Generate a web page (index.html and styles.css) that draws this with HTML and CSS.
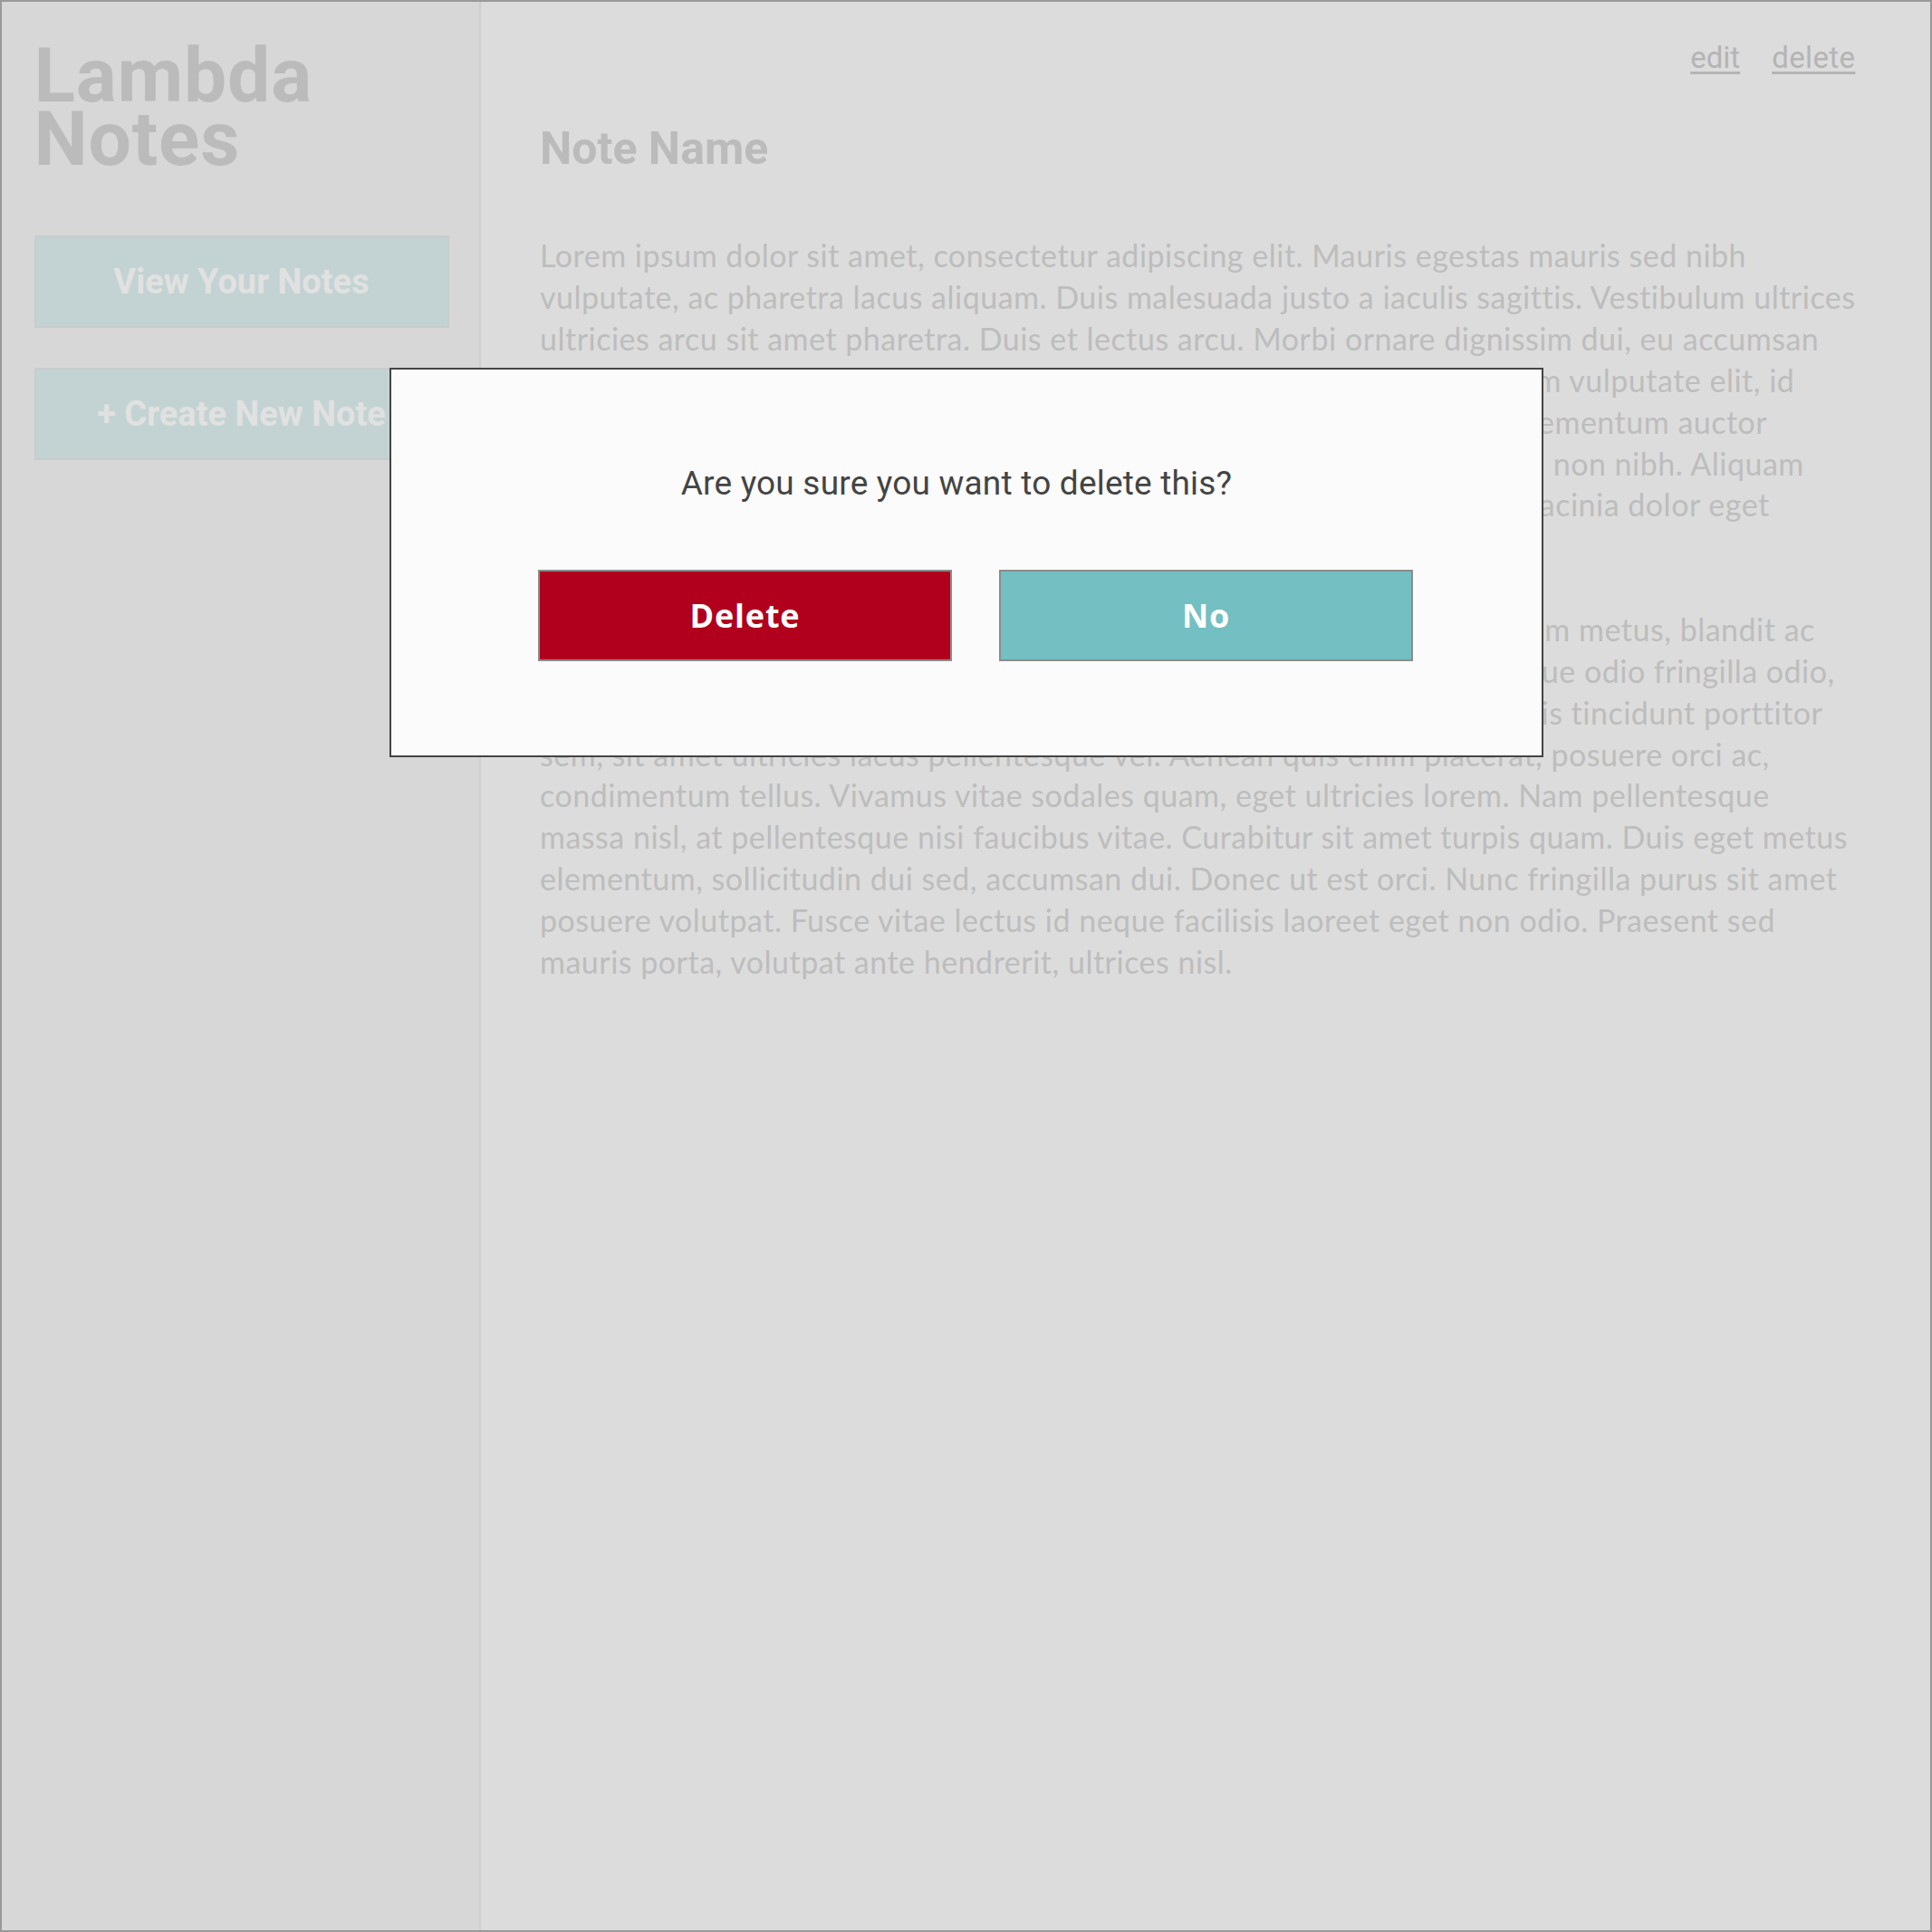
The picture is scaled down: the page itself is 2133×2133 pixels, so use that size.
FILE: index.html
```
<!DOCTYPE html>
<html lang="en">
<head>
<meta charset="utf-8">
<title>Lambda Notes</title>
<link rel="stylesheet" href="styles.css">
</head>
<body>
<div class="app">
  <aside class="sidebar">
    <h1 class="brand">Lambda<br>Notes</h1>
    <nav class="nav">
      <div class="nav-btn">View Your Notes</div>
      <div class="nav-btn">+ Create New Note</div>
    </nav>
  </aside>
  <main class="content">
    <div class="actions">
      <a class="action-link">edit</a>
      <a class="action-link">delete</a>
    </div>
    <h2 class="note-title">Note Name</h2>
    <div class="note-body">
      <p>Lorem ipsum dolor sit amet, consectetur adipiscing elit. Mauris egestas mauris sed nibh<br>vulputate, ac pharetra lacus aliquam. Duis malesuada justo a iaculis sagittis. Vestibulum ultrices<br>ultricies arcu sit amet pharetra. Duis et lectus arcu. Morbi ornare dignissim dui, eu accumsan<br>lectus tempus at. Phasellus in ante a quis nulla sed pretium luctus. Nullam vulputate elit, id<br>convallis lorem. Integer vel tellus ac ipsum tincidunt faucibus. Sed nec elementum auctor<br>mauris, a aliquet nunc. Curabitur ut mauris et vitae lorem tristique luctus non nibh. Aliquam<br>erat volutpat. Nulla facilisi. Suspendisse potenti. Vivamus in arcu at sed lacinia dolor eget<br>tempor. Sed a felis nec augue.</p>
      <p>Etiam sed nulla at sapien posuere cursus. Cras rutrum, nunc vel elit dictum metus, blandit ac<br>finibus nibh, vitae aliquet arcu. Maecenas quis nunc ut nulla sed nec neque odio fringilla odio,<br>ac consequat turpis. Pellentesque habitant morbi tristique senectus mollis tincidunt porttitor<br>sem, sit amet ultricies lacus pellentesque vel. Aenean quis enim placerat, posuere orci ac,<br>condimentum tellus. Vivamus vitae sodales quam, eget ultricies lorem. Nam pellentesque<br>massa nisl, at pellentesque nisi faucibus vitae. Curabitur sit amet turpis quam. Duis eget metus<br>elementum, sollicitudin dui sed, accumsan dui. Donec ut est orci. Nunc fringilla purus sit amet<br>posuere volutpat. Fusce vitae lectus id neque facilisis laoreet eget non odio. Praesent sed<br>mauris porta, volutpat ante hendrerit, ultrices nisl.</p>
    </div>
  </main>
  <div class="modal">
    <p class="modal-text">Are you sure you want to delete this?</p>
    <div class="modal-actions">
      <div class="modal-btn modal-btn-delete">Delete</div>
      <div class="modal-btn modal-btn-no">No</div>
    </div>
  </div>
</div>
</body>
</html>
```

FILE: styles.css
```
* {
  box-sizing: border-box;
}

html, body {
  margin: 0;
  padding: 0;
  background: #dcdcdc;
}

.app {
  position: relative;
  width: 2133px;
  height: 2133px;
  border: 2px solid #999999;
  display: flex;
  background: #dcdcdc;
  overflow: hidden;
}

.sidebar {
  width: 529px;
  flex: 0 0 529px;
  background: #d7d7d7;
  border-right: 2px solid #cecece;
  padding: 47px 0 0 35.5px;
}

.brand {
  margin: 0;
  font-family: Roboto, "Liberation Sans", sans-serif;
  font-weight: 700;
  font-size: 84px;
  line-height: 70px;
  color: #bbbbbb;
  letter-spacing: 0.8px;
}

.nav {
  display: flex;
  flex-direction: column;
  gap: 43.5px;
  margin-top: 71px;
}

.nav-btn {
  width: 458px;
  height: 102px;
  background: #c3d3d3;
  border: 2px solid #c8cccc;
  display: flex;
  align-items: center;
  justify-content: center;
  font-family: Roboto, "Liberation Sans", sans-serif;
  font-weight: 700;
  font-size: 38px;
  color: #e1e1e1;
  white-space: nowrap;
}

.content {
  flex: 1;
  padding: 41.7px 86px 0 65px;
}

.actions {
  display: flex;
  justify-content: flex-end;
  gap: 35px;
  height: 40px;
}

.action-link {
  font-family: Roboto, "Liberation Sans", sans-serif;
  font-size: 33px;
  line-height: 40px;
  color: #b4b4b4;
  text-decoration: underline;
  text-underline-offset: 4px;
}

.action-link + .action-link {
  letter-spacing: 0.4px;
}

.note-title {
  margin: 50px 0 0;
  font-family: Roboto, "Liberation Sans", sans-serif;
  font-weight: 700;
  font-size: 50px;
  line-height: 60px;
  color: #bbbbbb;
}

.note-body {
  margin-top: 65.7px;
}

.note-body p {
  margin: 0 0 45.85px;
  font-family: Lato, "Open Sans", sans-serif;
  font-size: 34px;
  letter-spacing: 0.5px;
  line-height: 45.85px;
  color: #bdbdbd;
  white-space: nowrap;
}

.modal {
  position: absolute;
  left: 428px;
  top: 403.7px;
  width: 1274px;
  height: 430.5px;
  background: #fbfbfb;
  border: 2px solid #444444;
  padding-top: 104px;
}

.modal-text {
  margin: 0;
  padding-right: 22px;
  text-align: center;
  font-family: Roboto, "Liberation Sans", sans-serif;
  font-size: 37px;
  letter-spacing: 0.2px;
  line-height: 44px;
  color: #444444;
}

.modal-actions {
  display: flex;
  gap: 52px;
  margin-top: 73.3px;
  padding-left: 162px;
}

.modal-btn {
  width: 457px;
  height: 101px;
  border: 2px solid #8c8c8c;
  display: flex;
  align-items: center;
  justify-content: center;
  font-family: "Open Sans", Roboto, sans-serif;
  font-weight: 700;
  font-size: 36px;
  letter-spacing: 0.8px;
  color: #ffffff;
}

.modal-btn-delete {
  background: #b0001e;
}

.modal-btn-no {
  background: #73bfc2;
}
```
